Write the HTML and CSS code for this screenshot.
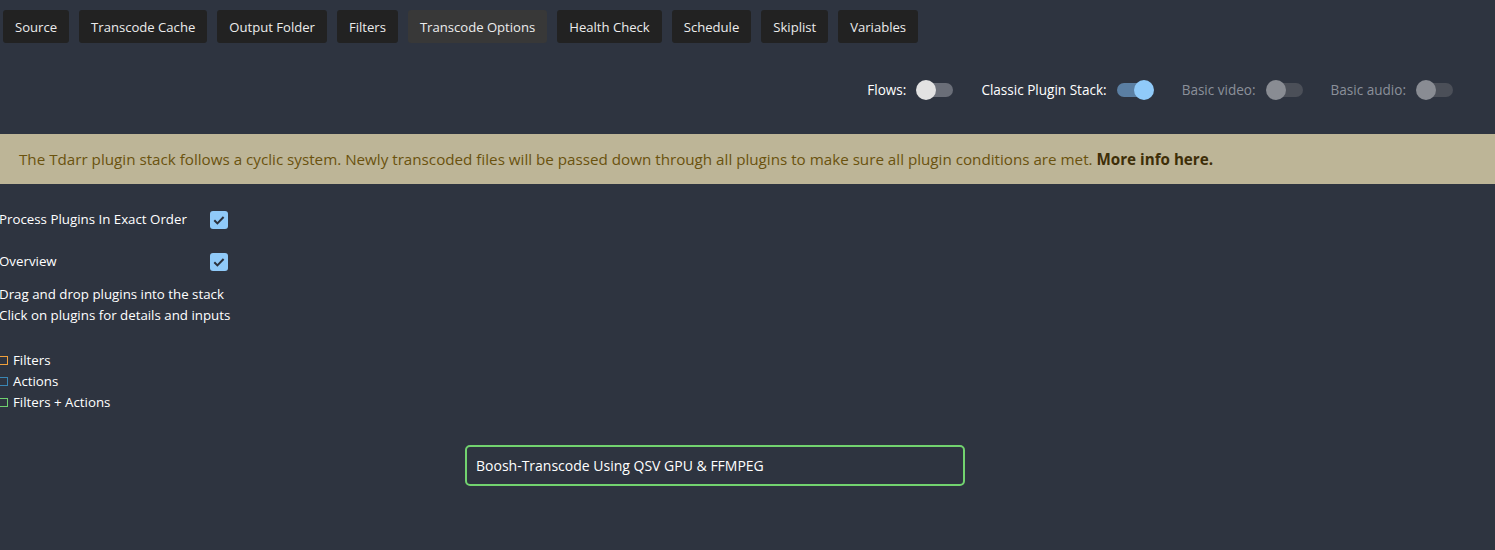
FILE: index.html
```html
<!DOCTYPE html>
<html lang="en">
<head>
<meta charset="utf-8">
<title>Transcode Options</title>
<link rel="stylesheet" href="styles.css">
</head>
<body>
<nav class="tabs">
  <button class="tab">Source</button>
  <button class="tab">Transcode Cache</button>
  <button class="tab">Output Folder</button>
  <button class="tab">Filters</button>
  <button class="tab tab-active">Transcode Options</button>
  <button class="tab">Health Check</button>
  <button class="tab">Schedule</button>
  <button class="tab">Skiplist</button>
  <button class="tab">Variables</button>
</nav>

<div class="switches">
  <label class="sw-item"><span class="sw-label">Flows:</span><span class="switch"><span class="track"></span><span class="thumb"></span></span></label>
  <label class="sw-item"><span class="sw-label">Classic Plugin Stack:</span><span class="switch on"><span class="track"></span><span class="thumb"></span></span></label>
  <label class="sw-item disabled"><span class="sw-label">Basic video:</span><span class="switch"><span class="track"></span><span class="thumb"></span></span></label>
  <label class="sw-item disabled"><span class="sw-label">Basic audio:</span><span class="switch"><span class="track"></span><span class="thumb"></span></span></label>
</div>

<div class="banner">
  <p>The Tdarr plugin stack follows a cyclic system. Newly transcoded files will be passed down through all plugins to make sure all plugin conditions are met. <b>More info here.</b></p>
</div>

<section class="panel">
  <div class="check-row">
    <span class="check-label">Process Plugins In Exact Order</span>
    <span class="checkbox"><svg viewBox="0 0 18 18" width="18" height="18"><path d="M4.3 9.3l3.1 3.1 6.2-6.4" fill="none" stroke="#2b313c" stroke-width="2"/></svg></span>
  </div>
  <div class="check-row">
    <span class="check-label">Overview</span>
    <span class="checkbox"><svg viewBox="0 0 18 18" width="18" height="18"><path d="M4.3 9.3l3.1 3.1 6.2-6.4" fill="none" stroke="#2b313c" stroke-width="2"/></svg></span>
  </div>
  <div class="help">
    <div>Drag and drop plugins into the stack</div>
    <div>Click on plugins for details and inputs</div>
  </div>
  <ul class="legend">
    <li><span class="sq sq-filter"></span>Filters</li>
    <li><span class="sq sq-action"></span>Actions</li>
    <li><span class="sq sq-both"></span>Filters + Actions</li>
  </ul>
</section>

<div class="stack">
  <div class="plugin">Boosh-Transcode Using QSV GPU &amp; FFMPEG</div>
</div>
</body>
</html>
```

FILE: styles.css
```css
* { box-sizing: border-box; }

html, body {
  margin: 0;
  background: #2e3440;
}

body {
  font-family: "Open Sans", "Noto Sans", sans-serif;
  font-size: 13.3px;
  color: #ffffff;
  height: 550px;
  overflow: hidden;
}

.tabs {
  display: flex;
  gap: 10px;
  padding: 10px 3px 0;
}

.tab {
  height: 33px;
  padding: 0 12px;
  border: none;
  border-radius: 3px;
  background: #222222;
  color: #ececec;
  font: inherit;
  font-size: 13.1px;
}

.tab-active {
  background: #383838;
}

.switches {
  display: flex;
  justify-content: flex-end;
  gap: 28px;
  padding-right: 42px;
  margin-top: 37px;
  height: 20px;
}

.sw-item {
  display: flex;
  align-items: center;
  gap: 10px;
  color: #ffffff;
  font-size: 13.55px;
}

.sw-item.disabled {
  color: #8b909a;
}

.switch {
  position: relative;
  width: 37px;
  height: 20px;
}

.track {
  position: absolute;
  left: 3px;
  top: 3px;
  width: 34px;
  height: 14px;
  border-radius: 7px;
  background: #6a6e78;
}

.thumb {
  position: absolute;
  left: 0;
  top: 0;
  width: 20px;
  height: 20px;
  border-radius: 50%;
  background: #e2e2e2;
}

.switch.on .track {
  left: 0;
  background: #5b7fa3;
}

.switch.on .thumb {
  left: 17px;
  background: #90caf9;
}

.disabled .track { background: #4b4f58; }
.disabled .thumb { background: #898c93; }

.banner {
  margin-top: 34px;
  height: 50px;
  background: #bdb597;
  display: flex;
  align-items: center;
  padding: 0 19px;
}

.banner p {
  margin: 0;
  font-size: 15.2px;
  color: #6a520e;
}

.banner b {
  color: #3d2e08;
  font-weight: 700;
}

.panel {
  padding-top: 27px;
  margin-left: -1px;
}

.check-row {
  display: flex;
  align-items: center;
  width: 229px;
  height: 18px;
  margin-bottom: 24px;
}

.check-label {
  flex: 1;
  margin-top: -3px;
}

.checkbox {
  width: 18px;
  height: 18px;
  border-radius: 3px;
  background: #90caf9;
  display: flex;
}

.help {
  margin-top: -11px;
  line-height: 21px;
}

.legend {
  list-style: none;
  margin: 24px 0 0;
  padding: 0;
  line-height: 21px;
}

.legend li {
  display: flex;
  align-items: center;
}

.sq {
  width: 9px;
  height: 9px;
  border: 1px solid;
  margin-right: 5px;
  flex: none;
}

.sq-filter { border-color: #f0a03c; }
.sq-action { border-color: #3a86b4; }
.sq-both { border-color: #6fd06f; }

.stack {
  margin-top: 32px;
  padding-left: 465px;
}

.plugin {
  width: 500px;
  height: 41px;
  border: 2px solid #72d36f;
  border-radius: 5px;
  display: flex;
  align-items: center;
  padding: 0 9px;
  color: #ffffff;
  font-size: 14px;
}
```
